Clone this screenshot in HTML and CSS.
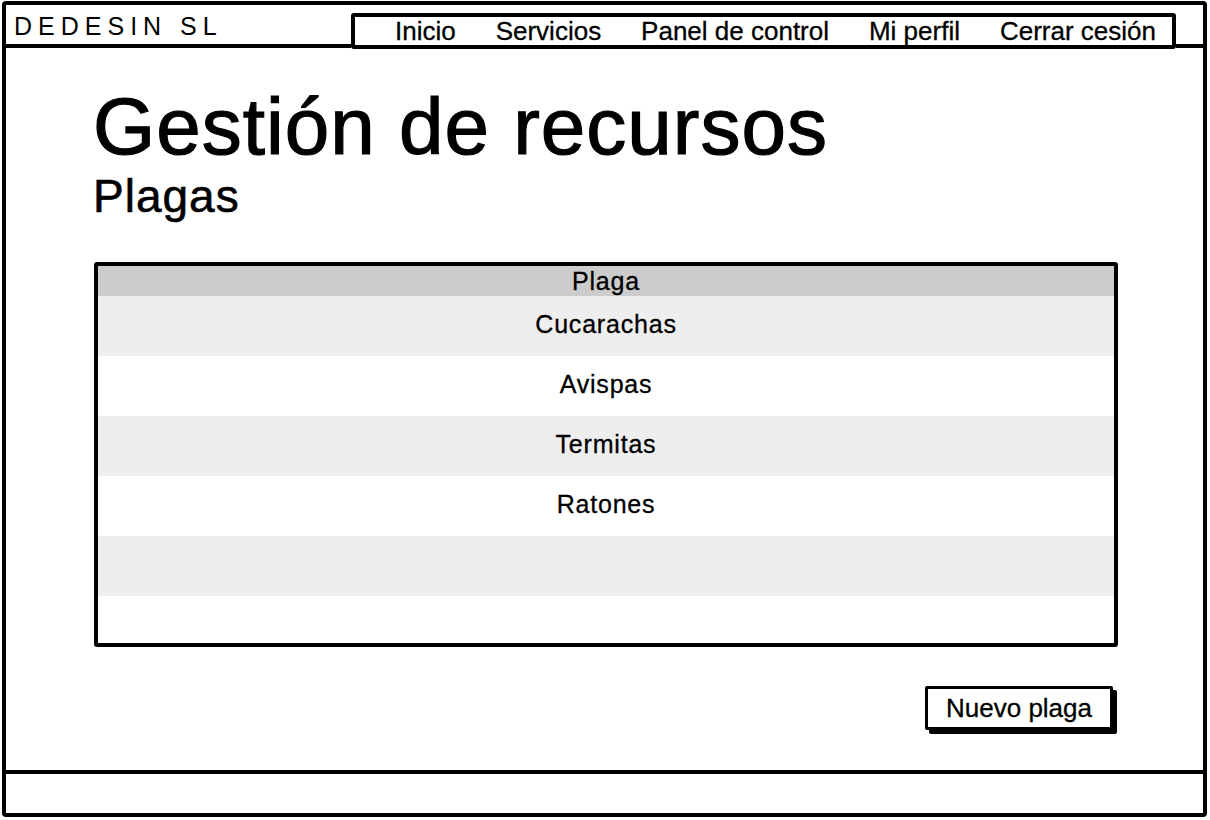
FILE: index.html
```html
<!DOCTYPE html>
<html lang="es">
<head>
    <meta charset="UTF-8">
    <meta name="viewport" content="width=device-width, initial-scale=1.0">
    <title>DEDESIN SL - Gestión de recursos</title>
    <link rel="stylesheet" href="styles.css">
</head>
<body>
    <div class="window">
        <header class="topbar">
            <div class="brand">DEDESIN SL</div>
            <nav class="menu">
                <a href="#">Inicio</a>
                <a href="#">Servicios</a>
                <a href="#">Panel de control</a>
                <a href="#">Mi perfil</a>
                <a href="#">Cerrar cesión</a>
            </nav>
            <div class="topbar-fill"></div>
        </header>

        <main class="content">
            <h1>Gestión de recursos</h1>
            <h2>Plagas</h2>

            <div class="grid">
                <table>
                    <thead>
                        <tr><th>Plaga</th></tr>
                    </thead>
                    <tbody>
                        <tr><td>Cucarachas</td></tr>
                        <tr><td>Avispas</td></tr>
                        <tr><td>Termitas</td></tr>
                        <tr><td>Ratones</td></tr>
                        <tr><td></td></tr>
                        <tr><td></td></tr>
                    </tbody>
                </table>
            </div>

            <div class="actions">
                <button type="button">Nuevo plaga</button>
            </div>
        </main>

        <footer class="bottombar"></footer>
    </div>
</body>
</html>
```

FILE: styles.css
```css
html, body {
    margin: 0;
    padding: 0;
    background: #fff;
}
body {
    font-family: "Liberation Sans", Arial, sans-serif;
    color: #000;
    -webkit-text-stroke: 0.3px #000;
}
.window {
    display: flex;
    flex-direction: column;
    box-sizing: border-box;
    width: 1205px;
    height: 816px;
    margin: 1px 0 0 2px;
    border: 4px solid #000;
    border-radius: 4px;
}

/* top bar */
.topbar {
    display: flex;
    height: 43px;
}
.brand {
    box-sizing: border-box;
    width: 345px;
    padding: 9px 0 0 8px;
    border-bottom: 4px solid #000;
    font-size: 25px;
    line-height: 25px;
    letter-spacing: 6px;
    -webkit-text-stroke: 0;
}
.menu {
    box-sizing: border-box;
    align-self: flex-end;
    display: flex;
    align-items: center;
    justify-content: space-between;
    width: 825px;
    height: 36px;
    margin-bottom: -1px;
    padding: 0 16px 0 40px;
    border: 4px solid #000;
    border-radius: 3px;
    background: #fff;
}
.menu a {
    color: #000;
    text-decoration: none;
    font-size: 26px;
    line-height: 28px;
}
.topbar-fill {
    flex: 1;
    border-bottom: 4px solid #000;
}

/* page body */
.content {
    flex: 1;
    padding: 0 85px 0 88px;
}
h1 {
    margin: 39px 0 0 -1px;
    font-size: 80px;
    font-weight: normal;
    line-height: 80px;
    letter-spacing: 1px;
    -webkit-text-stroke: 1.2px #000;
}
h2 {
    margin: 6px 0 0 -1px;
    font-size: 46px;
    font-weight: normal;
    line-height: 46px;
    letter-spacing: 1px;
    -webkit-text-stroke: 0.6px #000;
}
.grid {
    box-sizing: border-box;
    height: 385px;
    margin-top: 43px;
    border: 4px solid #000;
    border-radius: 3px;
    overflow: hidden;
}
.grid table {
    width: 100%;
    border-spacing: 0;
}
.grid th, .grid td {
    padding: 0;
    text-align: center;
    font-size: 25px;
    font-weight: normal;
    letter-spacing: 0.8px;
}
.grid th {
    height: 30px;
    background: #cccccc;
}
.grid td {
    height: 57px;
    padding-bottom: 3px;
}
.grid tbody tr:nth-child(odd) td {
    background: #eeeeee;
}
.actions {
    display: flex;
    justify-content: flex-end;
    margin: 39px 5px 0 0;
}
.actions button {
    box-sizing: border-box;
    height: 44px;
    padding: 0 18px;
    border: 3px solid #000;
    border-radius: 2px;
    background: #fff;
    box-shadow: 4px 4px 0 #000;
    font-family: inherit;
    font-size: 26px;
    color: #000;
    -webkit-text-stroke: 0.3px #000;
    cursor: pointer;
}

/* footer */
.bottombar {
    height: 39px;
    border-top: 4px solid #000;
}
```
